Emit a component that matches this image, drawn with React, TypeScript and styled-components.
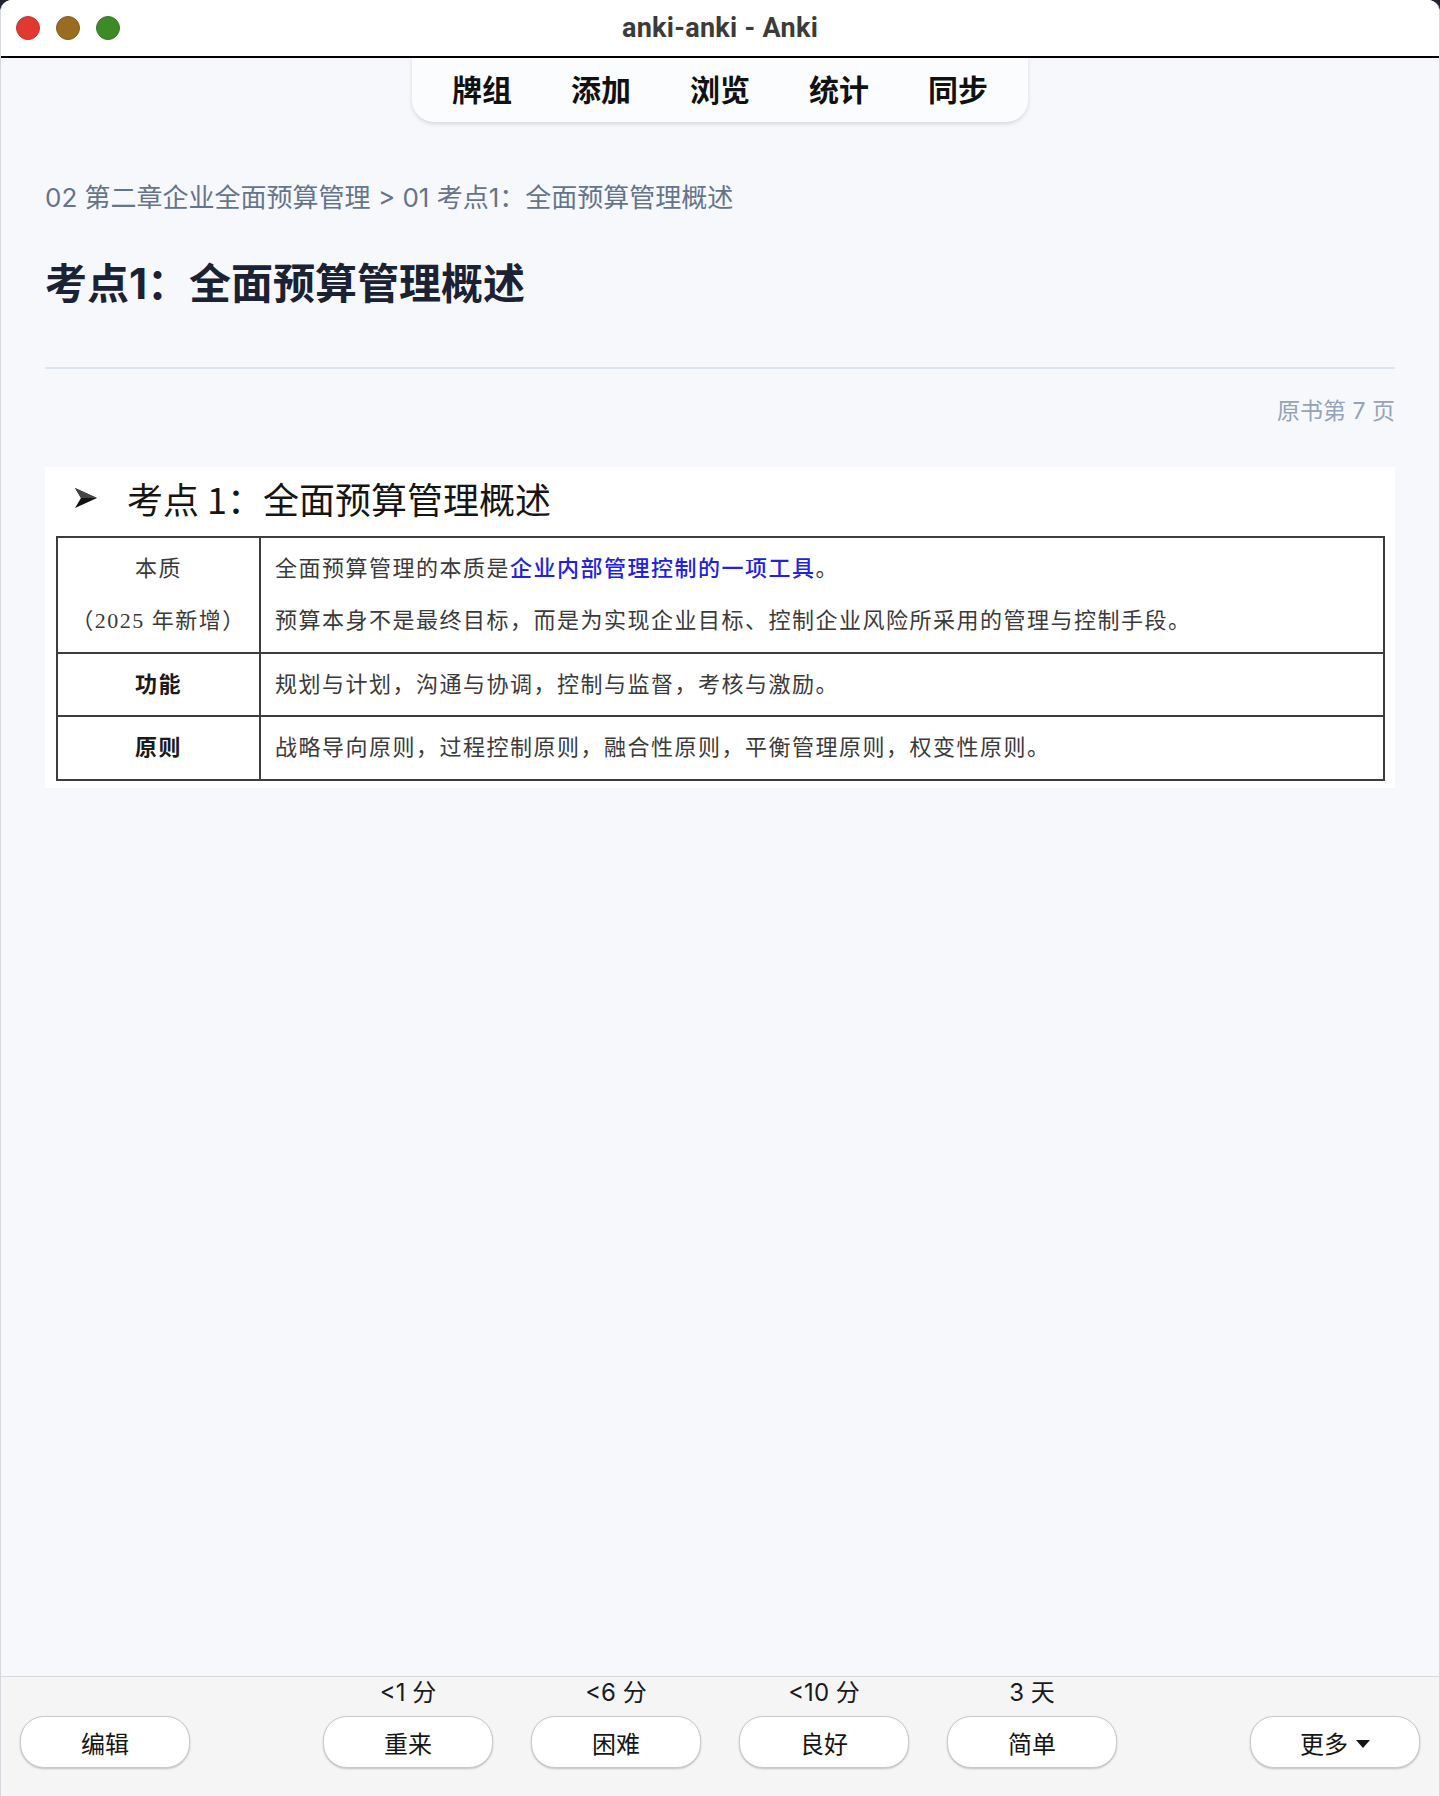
import React from 'react'
import styled, { createGlobalStyle } from 'styled-components'

const GlobalStyle = createGlobalStyle`
  html, body {
    margin: 0;
    padding: 0;
    background: #1f2430;
  }
  * {
    box-sizing: border-box;
  }
`

const sans = `"Inter", "Noto Sans CJK SC", sans-serif`
const song = `"Liberation Serif", "Noto Sans CJK SC", serif`

const Window = styled.div`
  width: 1440px;
  height: 1796px;
  display: flex;
  flex-direction: column;
  background: #f7f8fc;
  border-radius: 12px 12px 0 0;
  overflow: hidden;
  border-left: 1px solid #d6d8de;
  border-right: 1px solid #d6d8de;
  font-family: ${sans};
`

const TitleBar = styled.div`
  position: relative;
  height: 58px;
  flex-shrink: 0;
  background: #ffffff;
  border-bottom: 2px solid #000;
  display: flex;
  align-items: center;
  justify-content: center;
`

const Lights = styled.div`
  position: absolute;
  left: 15px;
  top: 16px;
  display: flex;
  gap: 16px;
`

const Light = styled.span<{ $color: string; $edge: string }>`
  width: 24px;
  height: 24px;
  border-radius: 50%;
  background: ${(p) => p.$color};
  border: 1px solid ${(p) => p.$edge};
`

const WindowTitle = styled.div`
  font-family: "Roboto", "Inter", sans-serif;
  font-weight: 700;
  font-size: 27px;
  color: #3b3b3b;
  letter-spacing: 0.3px;
`

const Main = styled.div`
  flex: 1;
  display: flex;
  flex-direction: column;
  padding: 0 44px;
`

const NavWrap = styled.div`
  display: flex;
  justify-content: center;
`

const Nav = styled.nav`
  height: 64px;
  padding: 0 40px 4px;
  display: flex;
  align-items: center;
  gap: 59px;
  background: #fbfcfe;
  border-radius: 0 0 22px 22px;
  box-shadow: 0 2px 4px rgba(0, 0, 0, 0.13);
`

const NavItem = styled.span`
  font-family: "Noto Sans CJK SC", sans-serif;
  font-weight: 700;
  font-size: 30px;
  line-height: 40px;
  color: #111;
`

const Breadcrumb = styled.div`
  margin-top: 60px;
  font-size: 26px;
  line-height: 32px;
  color: #64748b;
`

const Heading = styled.h1`
  margin: 44px 0 0;
  font-size: 42px;
  line-height: 52px;
  font-weight: 700;
  color: #1a2233;
`

const Rule = styled.hr`
  margin: 57px 0 0;
  border: none;
  height: 2px;
  background: #dfe5ee;
`

const PageRef = styled.div`
  margin-top: 27px;
  text-align: right;
  font-size: 23px;
  line-height: 30px;
  color: #94a3b8;
`

const Picture = styled.div`
  margin-top: 41px;
  background: #ffffff;
  padding: 8px 10px 7px 11px;
`

const PicTitle = styled.div`
  display: flex;
  align-items: center;
  gap: 29px;
  padding-left: 18px;
  height: 45px;
  margin-bottom: 16px;
  font-family: "Noto Sans CJK SC", sans-serif;
  font-size: 36px;
  font-weight: 400;
  color: #151515;
`

const Table = styled.table`
  width: 100%;
  border-collapse: collapse;
  border: 2px solid #3d3d3d;
  font-family: ${song};
  font-size: 22px;
  letter-spacing: 1.5px;
  color: #3a3a3a;
`

const Row = styled.tr<{ $height: number }>`
  height: ${(p) => p.$height}px;
`

const HeadCell = styled.td<{ $bold?: boolean }>`
  width: 203px;
  border: 2px solid #3d3d3d;
  text-align: center;
  vertical-align: middle;
  font-weight: ${(p) => (p.$bold ? 700 : 400)};
  color: ${(p) => (p.$bold ? '#1a1a1a' : '#3a3a3a')};
  line-height: 52px;
  padding: 0;
`

const BodyCell = styled.td`
  border: 2px solid #3d3d3d;
  vertical-align: middle;
  padding: 0 14px;
  line-height: 52px;
`

const Line = styled.div``

const Mark = styled.span`
  color: #2222dd;
  font-weight: 500;
`

const BottomBar = styled.div`
  height: 120px;
  flex-shrink: 0;
  background: #f5f5f6;
  border-top: 1px solid #d9d9dc;
  padding: 4px 19px 28px;
  display: flex;
  justify-content: space-between;
  align-items: flex-end;
  font-family: ${sans};
`

const Answers = styled.div`
  display: flex;
  gap: 38px;
`

const AnswerCol = styled.div`
  display: flex;
  flex-direction: column;
  align-items: center;
  gap: 10px;
`

const Interval = styled.div`
  font-size: 24px;
  line-height: 26px;
  color: #1a1a1a;
`

const Button = styled.button`
  width: 170px;
  height: 52px;
  border-radius: 24px;
  border: 1px solid #c9c9cc;
  background: #ffffff;
  box-shadow: 0 1px 2px rgba(0, 0, 0, 0.22);
  font-family: "Noto Sans CJK SC", sans-serif;
  font-size: 24px;
  color: #151515;
  display: flex;
  align-items: center;
  justify-content: center;
  gap: 8px;
  padding: 0;
`

const Caret = styled.span`
  width: 0;
  height: 0;
  border-left: 7px solid transparent;
  border-right: 7px solid transparent;
  border-top: 8px solid #151515;
  margin-top: 3px;
`

const Arrow = () => (
  <svg width="24" height="24" viewBox="0 0 24 24">
    <path d="M1 2 L23 12 L1 22 L7 12 Z" fill="#111" />
    <path d="M1 2 L23 12 L7 12 Z" fill="#444" />
  </svg>
)

const tabs = ['牌组', '添加', '浏览', '统计', '同步']

const answers = [
  { time: '<1 分', label: '重来' },
  { time: '<6 分', label: '困难' },
  { time: '<10 分', label: '良好' },
  { time: '3 天', label: '简单' }
]

export default function App() {
  return (
    <>
      <GlobalStyle />
      <Window>
        <TitleBar>
          <Lights>
            <Light $color="#e0392f" $edge="#c4342b" />
            <Light $color="#9a6c22" $edge="#85591a" />
            <Light $color="#3d8b26" $edge="#347a20" />
          </Lights>
          <WindowTitle>anki-anki - Anki</WindowTitle>
        </TitleBar>

        <Main>
          <NavWrap>
            <Nav>
              {tabs.map((t) => (
                <NavItem key={t}>{t}</NavItem>
              ))}
            </Nav>
          </NavWrap>

          <Breadcrumb>02 第二章企业全面预算管理 &gt; 01 考点1：全面预算管理概述</Breadcrumb>
          <Heading>考点1：全面预算管理概述</Heading>
          <Rule />
          <PageRef>原书第 7 页</PageRef>

          <Picture>
            <PicTitle>
              <Arrow />
              <span>考点 1：全面预算管理概述</span>
            </PicTitle>
            <Table>
              <tbody>
                <Row $height={116}>
                  <HeadCell>
                    <Line>本质</Line>
                    <Line>（2025 年新增）</Line>
                  </HeadCell>
                  <BodyCell>
                    <Line>
                      全面预算管理的本质是<Mark>企业内部管理控制的一项工具</Mark>。
                    </Line>
                    <Line>预算本身不是最终目标，而是为实现企业目标、控制企业风险所采用的管理与控制手段。</Line>
                  </BodyCell>
                </Row>
                <Row $height={63}>
                  <HeadCell $bold>功能</HeadCell>
                  <BodyCell>规划与计划，沟通与协调，控制与监督，考核与激励。</BodyCell>
                </Row>
                <Row $height={64}>
                  <HeadCell $bold>原则</HeadCell>
                  <BodyCell>战略导向原则，过程控制原则，融合性原则，平衡管理原则，权变性原则。</BodyCell>
                </Row>
              </tbody>
            </Table>
          </Picture>
        </Main>

        <BottomBar>
          <Button>编辑</Button>
          <Answers>
            {answers.map((a) => (
              <AnswerCol key={a.label}>
                <Interval>{a.time}</Interval>
                <Button>{a.label}</Button>
              </AnswerCol>
            ))}
          </Answers>
          <Button>
            更多
            <Caret />
          </Button>
        </BottomBar>
      </Window>
    </>
  )
}
